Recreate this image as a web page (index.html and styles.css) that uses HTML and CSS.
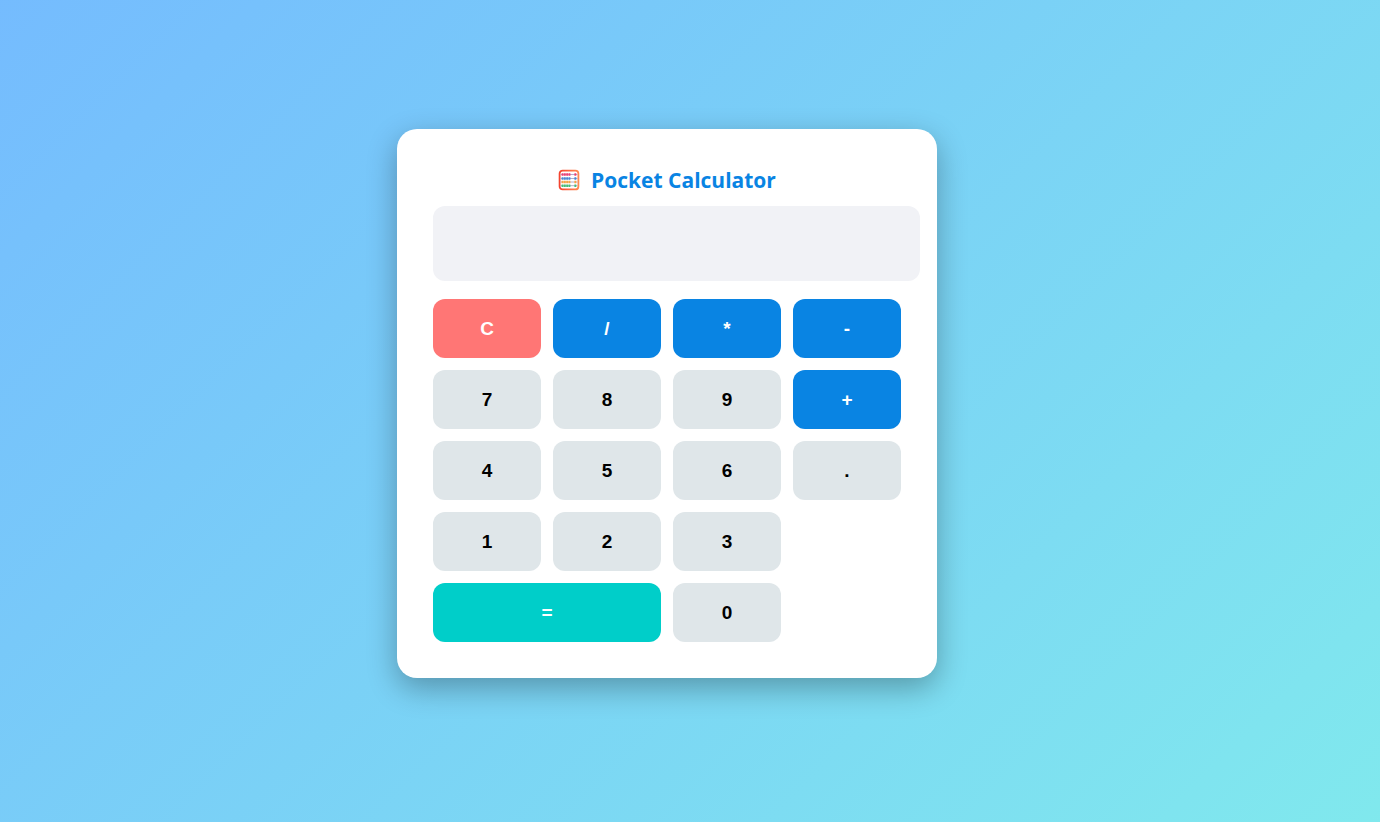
FILE: index.html
```
<!DOCTYPE html>
<html lang="en">
<head>
  <meta charset="UTF-8" />
  <meta name="viewport" content="width=device-width, initial-scale=1.0" />
  <title>Pocket Calculator</title>
  <link rel="stylesheet" href="styles.css">
</head>
<body>
  <div class="calculator">
    <h2 class="title">
      <svg class="abacus" viewBox="0 0 22 22" aria-hidden="true">
        <defs>
          <linearGradient id="frame" x1="0" y1="0" x2="1" y2="0">
            <stop offset="0" stop-color="#f4442e" />
            <stop offset="1" stop-color="#ff8a50" />
          </linearGradient>
        </defs>
        <rect x="1.6" y="1.6" width="18.8" height="18.8" rx="3" fill="#fff" stroke="url(#frame)" stroke-width="1.8" />
        <path d="M2.5 5.5h17M2.5 9.5h17M2.5 13h17M2.5 16.7h17" stroke="#a9a4c4" stroke-width="0.9" />
        <g fill="none" stroke-width="2.6" stroke-dasharray="1.9 0.4">
          <path d="M3.6 5.5h9M16.4 5.5h1.9" stroke="#ee3f72" />
          <path d="M3.6 9.5h9M16.4 9.5h1.9" stroke="#4788d4" />
          <path d="M3.6 13h9M16.4 13h1.9" stroke="#f9a540" />
          <path d="M3.6 16.7h9M16.4 16.7h1.9" stroke="#45c078" />
        </g>
      </svg>
      <span>Pocket Calculator</span>
    </h2>

    <input type="text" id="display" class="display" aria-label="Result" readonly>

    <div class="buttons">
      <button class="clear" data-key="C">C</button>
      <button class="operator" data-key="/">/</button>
      <button class="operator" data-key="*">*</button>
      <button class="operator" data-key="-">-</button>

      <button data-key="7">7</button>
      <button data-key="8">8</button>
      <button data-key="9">9</button>
      <button class="operator" data-key="+">+</button>

      <button data-key="4">4</button>
      <button data-key="5">5</button>
      <button data-key="6">6</button>
      <button data-key=".">.</button>

      <button data-key="1">1</button>
      <button data-key="2">2</button>
      <button data-key="3">3</button>

      <button class="equal" data-key="=">=</button>
      <button data-key="0">0</button>
    </div>
  </div>

  <script>
    const display = document.getElementById('display');

    document.querySelector('.buttons').addEventListener('click', (e) => {
      const key = e.target.dataset.key;
      if (!key) return;

      if (key === 'C') {
        display.value = '';
      } else if (key === '=') {
        try {
          display.value = eval(display.value) ?? '';
        } catch (error) {
          display.value = 'Error';
        }
      } else {
        display.value += key;
      }
    });
  </script>
</body>
</html>
```
FILE: styles.css
```
body {
  margin: 0;
  padding: 0 46px 15px 0;
  box-sizing: border-box;
  min-height: 100vh;
  display: flex;
  align-items: center;
  justify-content: center;
  font-family: 'Open Sans', 'Noto Sans', sans-serif;
  background: linear-gradient(135deg, #74b9ff -6%, #81ecec 108%);
}

.calculator {
  box-sizing: border-box;
  width: 100%;
  max-width: 540px;
  padding: 36px;
  border-radius: 20px;
  background-color: #fff;
  box-shadow: 0 10px 30px rgba(0, 0, 0, 0.3);
}

.title {
  display: flex;
  align-items: center;
  justify-content: center;
  gap: 11px;
  margin: 0 0 11px;
  font-size: 21px;
  font-weight: 700;
  line-height: 30px;
  color: #0984e3;
}

.abacus {
  width: 22px;
  height: 22px;
}

.display {
  width: 95%;
  height: 35px;
  padding: 20px 21px;
  margin: 0 0 18px;
  display: block;
  border: none;
  border-radius: 12px;
  outline: none;
  background-color: #f1f2f6;
  color: #2d3436;
  font-family: 'Liberation Sans', Arial, sans-serif;
  font-size: 28px;
  text-align: right;
}

.buttons {
  display: grid;
  grid-template-columns: repeat(4, 1fr);
  gap: 12px;
}

button {
  height: 59px;
  padding: 0;
  border: none;
  border-radius: 12px;
  cursor: pointer;
  background-color: #dfe6e9;
  color: #000;
  font-family: 'Liberation Sans', Arial, sans-serif;
  font-size: 19px;
  font-weight: bold;
  transition: background-color 0.2s ease;
}

button:hover {
  background-color: #b2bec3;
}

.operator {
  background-color: #0984e3;
  color: #fff;
}

.operator:hover {
  background-color: #0768b5;
}

.clear {
  background-color: #ff7675;
  color: #fff;
}

.clear:hover {
  background-color: #d63031;
}

/* starts its own row, below 1 2 3 */
.equal {
  grid-column: 1 / span 2;
  background-color: #00cec9;
  color: #fff;
}

.equal:hover {
  background-color: #00b5b0;
}
```
